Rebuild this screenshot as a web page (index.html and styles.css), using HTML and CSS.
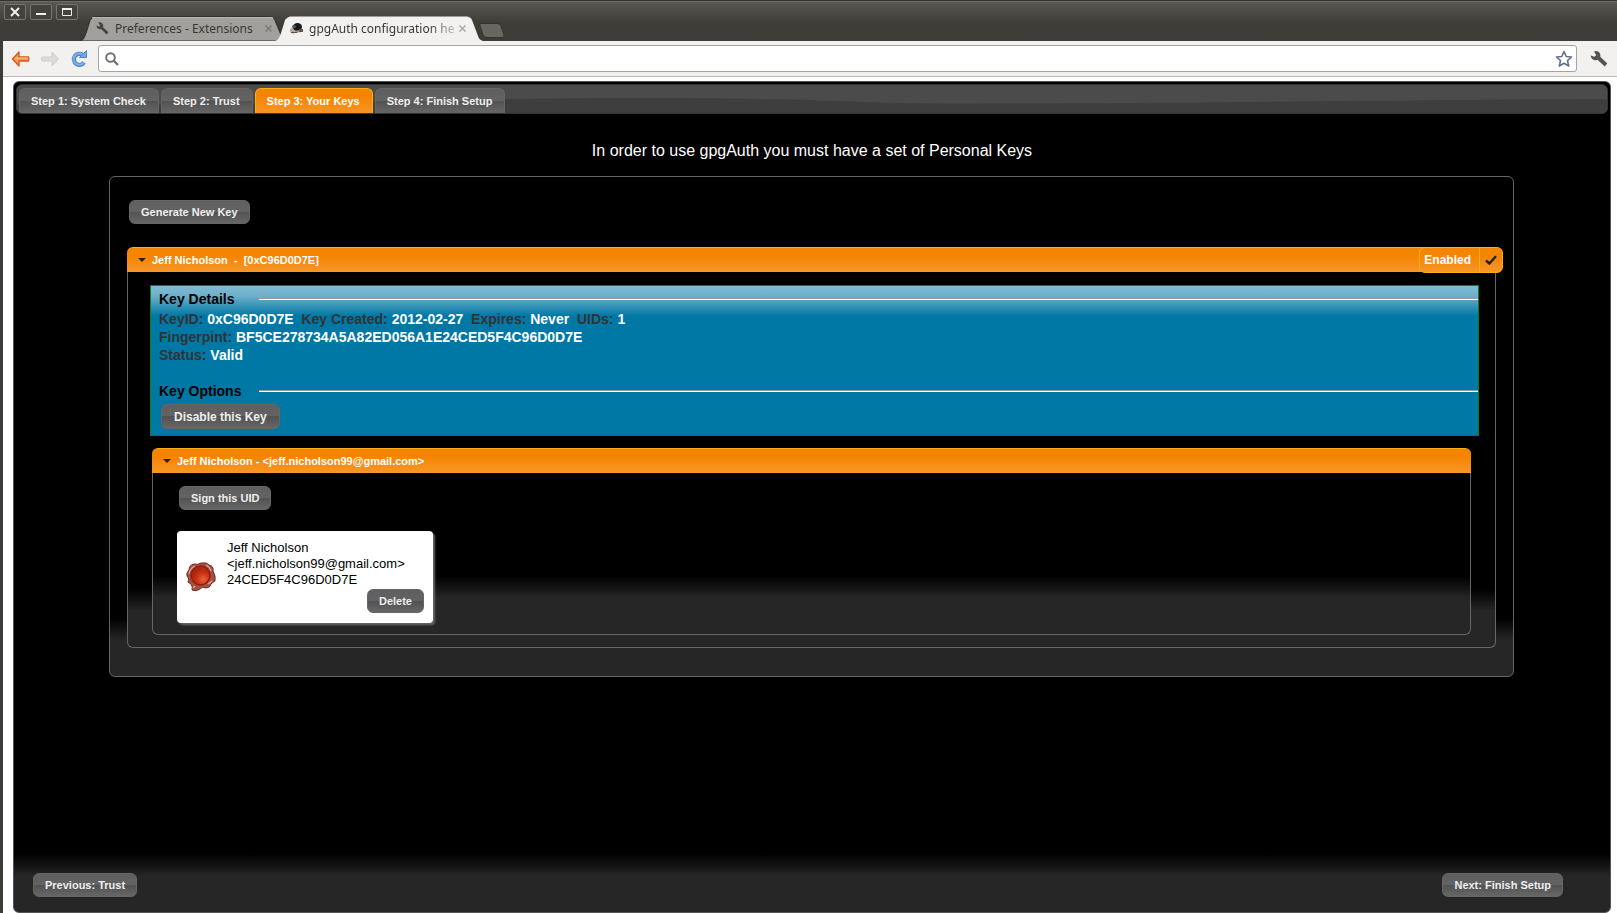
FILE: index.html
```html
<!DOCTYPE html>
<html lang="en">
<head>
<meta charset="utf-8">
<title>gpgAuth configuration helper</title>
<link rel="stylesheet" href="styles.css">
</head>
<body>
<div class="window">
  <header class="titlebar">
    <div class="window-controls">
      <button class="window-button" type="button" aria-label="Close"><svg width="20" height="14" viewBox="0 0 20 14"><path d="M6 3l8 8M14 3l-8 8" stroke="#f0efeb" stroke-width="2"/></svg></button>
      <button class="window-button" type="button" aria-label="Minimize"><svg width="20" height="14" viewBox="0 0 20 14"><path d="M5 9h10" stroke="#f0efeb" stroke-width="2"/></svg></button>
      <button class="window-button" type="button" aria-label="Maximize"><svg width="20" height="14" viewBox="0 0 20 14"><path d="M5.500 3.500h9v7h-9z" fill="none" stroke="#f0efeb"/><path d="M5 4h10" stroke="#f0efeb" stroke-width="2"/></svg></button>
    </div>
    <div class="tabstrip">
      <div class="browser-tab">
        <svg class="tab-shape" viewBox="0 0 200 25" preserveAspectRatio="none"><path d="M0 25C4 24 5 20 7 14L10 4Q12 1 15 .5H188Q192 1 193 4L199 19Q200 24 200 25Z" fill="#a2a09c" stroke="#33322e"/><path d="M12 1.500H191" stroke="#bab8b4"/></svg>
        <svg class="tab-icon" width="13" height="13" viewBox="0 0 13 13"><path d="M2 .8a3.600 3.600 0 0 1 5 4.500l5.500 5-2 2.300-5.300-5.500A3.600 3.600 0 0 1 .5 3.300l2.300 1.500 1.500-1.300z" fill="#454441"/></svg>
        <a class="tab-title" href="#preferences">Preferences - Extensions</a>
        <button class="tab-close" type="button" aria-label="Close tab"><svg width="9" height="9" viewBox="0 0 9 9"><path d="M1.500 1.500l6 6M7.500 1.500l-6 6" stroke="#7d7b77" stroke-width="1.500"/></svg></button>
      </div>
      <div class="browser-tab browser-tab-active">
        <svg class="tab-shape" viewBox="0 0 208 25" preserveAspectRatio="none"><path d="M0 25C4 24 5 20 7 14L10 4Q12 1 15 .5H192Q196 1 197 4L203 20Q204 24 208 25Z" fill="#f2f1f0"/></svg>
        <svg class="tab-icon" width="13" height="13" viewBox="0 0 13 13"><ellipse cx="3" cy="8.500" rx="3" ry="3" fill="#aaa"/><ellipse cx="7.500" cy="5" rx="4.500" ry="4" fill="#17191b"/><ellipse cx="4" cy="4.500" rx="2" ry="1.500" fill="#555"/><path d="M5 9l5-1 1 2-5 1z" fill="#d18a3d"/><path d="M9 7h4v3H9zM1 10h6v1H1z" fill="#555"/></svg>
        <a class="tab-title tab-title-faded" href="#config">gpgAuth configuration he</a>
        <button class="tab-close" type="button" aria-label="Close tab"><svg width="9" height="9" viewBox="0 0 9 9"><path d="M1.500 1.500l6 6M7.500 1.500l-6 6" stroke="#aaa9a6" stroke-width="1.500"/></svg></button>
      </div>
      <button class="new-tab" type="button" aria-label="New tab"><svg width="26" height="16" viewBox="0 0 26 16"><path d="M2 .5H18Q21 .5 22 3L25 12Q25.500 14.500 23 14.500H8Q5 14.500 4 12L.8 2Q.5 .5 2 .5Z" fill="#686661" stroke="#33322e"/></svg></button>
    </div>
  </header>

  <div class="toolbar">
    <button class="tool" type="button" aria-label="Back"><svg width="20" height="18" viewBox="0 0 20 18"><path d="M8 2L1.500 9 8 16V11H17.500Q18.500 9 17.500 7H8Z" fill="#f39a5a" stroke="#d2571c" stroke-width="1.300" stroke-linejoin="round"/><path d="M4 8.300l4-.3h9" stroke="#fbc49b" fill="none"/></svg></button>
    <button class="tool" type="button" aria-label="Forward"><svg width="20" height="18" viewBox="0 0 20 18"><path d="M12 2l6.500 7L12 16V11H2Q1 9 2 7H12Z" fill="#dcdbd9" stroke="#cfcdca" stroke-linejoin="round"/></svg></button>
    <button class="tool" type="button" aria-label="Reload"><svg width="20" height="20" viewBox="0 0 20 20"><path d="M13.500 5.800A5.500 5.500 0 1 0 15 13.300" fill="none" stroke="#4a86c4" stroke-width="4.200"/><path d="M10.500 8.500h7v-7z" fill="#74aadb" stroke="#4a86c4"/><path d="M13 5.500A5.500 5.500 0 1 0 14.500 13.500" fill="none" stroke="#7fb2e0" stroke-width="2.200"/></svg></button>
    <div class="address">
      <svg width="14" height="14" viewBox="0 0 14 14"><circle cx="5.500" cy="5.500" r="4.300" fill="none" stroke="#6f6f6d" stroke-width="1.900"/><path d="M8.500 8.500l4.500 4.500" stroke="#6f6f6d" stroke-width="2.300"/></svg>
      <input class="address-input" type="text" aria-label="Address">
      <button class="star" type="button" aria-label="Bookmark"><svg width="18" height="18" viewBox="0 0 18 18"><path d="M9 1.500l2.200 5 5.300.5-4 3.600 1.200 5.400L9 13.300 4.300 16l1.200-5.400-4-3.600 5.300-.5z" fill="#fff" stroke="#62708c" stroke-width="1.600" stroke-linejoin="round"/></svg></button>
    </div>
    <button class="menu" type="button" aria-label="Menu"><svg width="18" height="18" viewBox="0 0 18 18"><path d="M4 1.500a4.500 4.500 0 0 1 6.300 5.300l7 6.700-2.600 3-7.200-6.800A4.600 4.600 0 0 1 .8 5.500l3.600 1.300 1.800-1.600z" fill="#555452"/></svg></button>
  </div>

  <div class="page">
    <main class="wizard">
      <nav class="steps">
        <svg class="steps-wave" viewBox="0 0 1592 30" preserveAspectRatio="none"><path d="M0 20C250 24 400 14 620 14S820 20 960 20S1400 16 1592 15V30H0Z" fill="#3e3e3e"/></svg>
        <a class="step" href="#step1">Step 1: System Check</a>
        <a class="step" href="#step2">Step 2: Trust</a>
        <a class="step step-active" href="#step3" aria-current="step">Step 3: Your Keys</a>
        <a class="step" href="#step4">Step 4: Finish Setup</a>
      </nav>
      <h1 class="lead">In order to use gpgAuth you must have a set of Personal Keys</h1>
      <section class="keys">
        <button class="btn keys-generate" type="button">Generate New Key</button>
        <div class="accordion">
          <div class="accordion-head">
            <button class="accordion-toggle" type="button" aria-expanded="true"><span class="caret"></span><span class="accordion-label">Jeff Nicholson&nbsp; -&nbsp; [0xC96D0D7E]</span></button>
            <div class="enabled">
              <button class="enabled-label" type="button">Enabled</button>
              <button class="enabled-check" type="button" aria-label="Toggle key"><svg width="12" height="10" viewBox="0 0 12 10"><path d="M1 5.500l3.300 3L11 1.200" fill="none" stroke="#222" stroke-width="2.400"/></svg></button>
            </div>
          </div>
          <div class="accordion-body key-body">
            <div class="key-info">
              <h2 class="key-title">Key Details</h2>
              <p class="key-line">KeyID: <b>0xC96D0D7E</b>&nbsp; Key Created: <b>2012-02-27</b>&nbsp; Expires: <b>Never</b>&nbsp; UIDs: <b>1</b></p>
              <p class="key-line">Fingerpint: <b>BF5CE278734A5A82ED056A1E24CED5F4C96D0D7E</b></p>
              <p class="key-line">Status: <b>Valid</b></p>
              <h2 class="key-title key-title-options">Key Options</h2>
              <button class="btn btn-large" type="button">Disable this Key</button>
            </div>
            <div class="accordion uid">
              <div class="accordion-head">
                <button class="accordion-toggle" type="button" aria-expanded="true"><span class="caret"></span><span class="accordion-label">Jeff Nicholson - &lt;jeff.nicholson99@gmail.com&gt;</span></button>
              </div>
              <div class="accordion-body uid-body">
                <button class="btn uid-sign" type="button">Sign this UID</button>
                <article class="signature">
                  <svg class="seal" width="30" height="30" viewBox="0 0 30 30">
                    <defs><radialGradient id="wax" cx=".65" cy=".7"><stop offset="0" stop-color="#ee6038"/><stop offset=".6" stop-color="#cf3818"/><stop offset="1" stop-color="#b42a12"/></radialGradient></defs>
                    <path d="M8 2Q12 3 15 1Q21 0 23 3Q28 4 27 9Q30 14 29 19Q26 21 25 22Q24 26 20 26Q16 24 14 27Q10 30 6 28Q7 25 5 22Q3 21 2 20Q4 17 1 14Q0 11 3 8Q3 3 8 2Z" fill="#a8503f" stroke="#6b3028"/>
                    <path d="M3 12Q4 6 9 4M20 3Q24 5 25 9M26 19L22 22M7 26L9 24" fill="none" stroke="#e0a598" stroke-width="1.300"/>
                    <circle cx="14.500" cy="13.500" r="9.500" fill="url(#wax)" stroke="#8f1f0d" stroke-width="1.500"/>
                    <path d="M7 14A7.500 7.500 0 0 1 15 6.500" fill="none" stroke="#a82711" stroke-width="1.500"/>
                  </svg>
                  <div class="signature-main">
                    <div>Jeff Nicholson</div>
                    <div>&lt;jeff.nicholson99@gmail.com&gt;</div>
                    <div>24CED5F4C96D0D7E</div>
                    <button class="btn signature-delete" type="button">Delete</button>
                  </div>
                </article>
              </div>
            </div>
          </div>
        </div>
      </section>
      <footer class="wizard-footer">
        <button class="btn" type="button">Previous: Trust</button>
        <button class="btn" type="button">Next: Finish Setup</button>
      </footer>
    </main>
  </div>
</div>
</body>
</html>
```

FILE: styles.css
```css
* { box-sizing: border-box; }
body {
  margin: 0;
  background: #fff;
  font-family: "Liberation Sans", Arial, sans-serif;
  font-size: 13px;
}
button { margin: 0; padding: 0; border: 0; background: none; font-family: inherit; cursor: pointer; }
a { text-decoration: none; }
svg { display: block; flex: none; }

.window {
  display: flex;
  flex-direction: column;
  min-height: 100vh;
  border-left: 3px solid #3c3b37;
}

/* Title bar and browser tabs */
.titlebar {
  display: flex;
  align-items: flex-end;
  height: 41px;
  margin-left: -3px;
  border-top: 1px solid #33322e;
  background: linear-gradient(#73716b 0, #57554f 2px, #3e3d38 22px, #3c3b37);
}
.window-controls { display: flex; align-self: flex-start; gap: 4px; padding: 3px 0 0 4px; }
.window-button {
  display: grid;
  place-items: center;
  width: 22px;
  height: 16px;
  border: 1px solid #77756f;
  border-radius: 2px;
  background: #44423d;
}
.tabstrip { display: flex; align-items: flex-end; margin-left: 2px; }
.browser-tab {
  position: relative;
  display: flex;
  align-items: center;
  width: 202px;
  height: 25px;
  padding: 0 9px 0 16px;
}
.browser-tab-active { width: 208px; margin-left: -7px; padding-right: 16px; padding-left: 15px; }
.tab-shape { position: absolute; inset: 0; width: 100%; height: 100%; }
.tab-icon, .tab-title, .tab-close { position: relative; }
.tab-title {
  flex: 1;
  margin-left: 6px;
  overflow: hidden;
  color: #3a3833;
  font: 12px/20px "Noto Sans", "Open Sans", sans-serif;
  white-space: nowrap;
}
.tab-title-faded { mask-image: linear-gradient(to right, #000 80%, transparent 104%); }
.tab-close { flex: none; }
.new-tab { align-self: center; margin: 4px 0 0 -4px; }

/* Toolbar */
.toolbar {
  display: flex;
  align-items: center;
  height: 36px;
  padding: 0 9px 0 8px;
  border-bottom: 1px solid #bbb9b6;
  background: #f2f1f0;
}
.tool { width: 20px; margin-right: 9px; }
.address {
  display: flex;
  flex: 1;
  align-items: center;
  height: 27px;
  padding: 0 3px 0 6px;
  border: 1px solid #a5a49f;
  border-radius: 3px;
  background: #fff;
}
.address-input { flex: 1; min-width: 0; border: 0; outline: 0; background: none; font-size: 13px; }
.menu { margin-left: 13px; }

/* Wizard */
.page { display: flex; flex: 1; padding: 4px 6px 0 10px; }
.wizard {
  display: flex;
  flex: 1;
  flex-direction: column;
  min-width: 0;
  padding-top: 2px;
  border: 1px solid #555;
  border-radius: 6px;
}
.wizard, .keys, .accordion-body {
  background: linear-gradient(to top, #262626 36px, #000 58px);
}
.steps {
  position: relative;
  display: flex;
  gap: 2px;
  height: 30px;
  margin: 0 2px;
  padding: 3px 2px 0;
  overflow: hidden;
  border: 1px solid #333;
  border-radius: 6px;
  background: #4b4b4b;
}
.steps-wave { position: absolute; inset: 0; width: 100%; height: 100%; }
.step, .btn {
  border: 1px solid #666;
  background: linear-gradient(#5f5f5f, #636363 50%, #525252 50%, #666);
  color: #eee;
  font-size: 11px;
  font-weight: bold;
}
.step {
  position: relative;
  height: 25px;
  padding: 0 12px 0 11px;
  border-bottom: 0;
  border-radius: 6px 6px 0 0;
  line-height: 25px;
  white-space: nowrap;
}
.step-active {
  height: 26px;
  border-color: #fcb010;
  background: linear-gradient(#f58400 30%, #f7962a);
  color: #fff;
}
.btn {
  height: 24px;
  padding: 0 11px;
  border-radius: 6px;
  line-height: 22px;
  white-space: nowrap;
}
.btn-large { height: 25px; margin: 3px 0 0 2px; padding: 0 12px; font-size: 12px; }

.lead {
  margin: 27px 0 15px;
  color: #fff;
  font-size: 16px;
  font-weight: normal;
  line-height: 20px;
  text-align: center;
}
.keys {
  margin: 0 96px 0 95px;
  padding: 23px 17px 28px;
  border: 1px solid #666;
  border-radius: 6px;
}
.keys-generate { display: block; margin: 0 0 23px 2px; }

.accordion-head {
  position: relative;
  height: 25px;
  border-top: 1px solid #fcb010;
  border-radius: 6px 6px 0 0;
  background: linear-gradient(#f58400 30%, #f7962a);
}
.accordion-toggle {
  display: flex;
  align-items: center;
  gap: 6px;
  width: 100%;
  height: 24px;
  padding-left: 11px;
  color: #fff;
  font-size: 11px;
  font-weight: bold;
}
.caret { border: 4px solid transparent; border-top-color: #222; border-bottom: 0; }
.accordion-body {
  border: 1px solid #666;
  border-top: 0;
  border-radius: 0 0 6px 6px;
}
.enabled {
  position: absolute;
  top: -1px;
  right: -7px;
  display: flex;
  height: 26px;
  border: 1px solid #fcb010;
  border-radius: 6px;
  background: linear-gradient(#f58400 30%, #f7962a);
}
.enabled-label { padding: 0 8px 0 4px; color: #fff; font-size: 12px; font-weight: bold; }
.enabled-check { display: grid; place-items: center; width: 23px; border-left: 1px solid #fcb010; }

.key-body { padding: 13px 16px 12px 22px; }
.key-info {
  padding: 3px 0 6px 8px;
  border: 1px solid #0b8019;
  background: linear-gradient(#82bbd4, #6cafcb 10px, #0078a5 30px);
  font-size: 14px;
  font-weight: bold;
}
.key-title {
  display: grid;
  grid-template-columns: 100px 1fr;
  align-items: center;
  margin: 0 0 1px;
  color: #000;
  font-size: 14px;
  line-height: 20px;
}
.key-title::after {
  border-top: 1px solid #999;
  border-bottom: 1px solid #fff;
  content: "";
}
.key-title-options { margin: 17px 0 0; }
.key-line { margin: 0; color: #333; line-height: 18px; }
.key-line b { color: #fff; }

.uid { margin: 12px 8px 0 2px; }
.uid-body { padding: 13px 24px 11px; }
.uid-sign { display: block; margin: 0 0 21px 2px; }
.signature {
  display: flex;
  gap: 11px;
  align-items: center;
  width: 256px;
  padding: 9px 9px 10px;
  border-radius: 4px;
  background: #fff;
  box-shadow: 2px 2px 2px #666;
  color: #000;
  font-size: 13px;
  line-height: 16px;
}
.signature-main { display: flex; flex: 1; flex-direction: column; }
.signature-delete { align-self: flex-end; margin-top: 1px; }

.wizard-footer {
  display: flex;
  justify-content: space-between;
  margin-top: auto;
  padding: 24px 47px 15px 19px;
}
```
